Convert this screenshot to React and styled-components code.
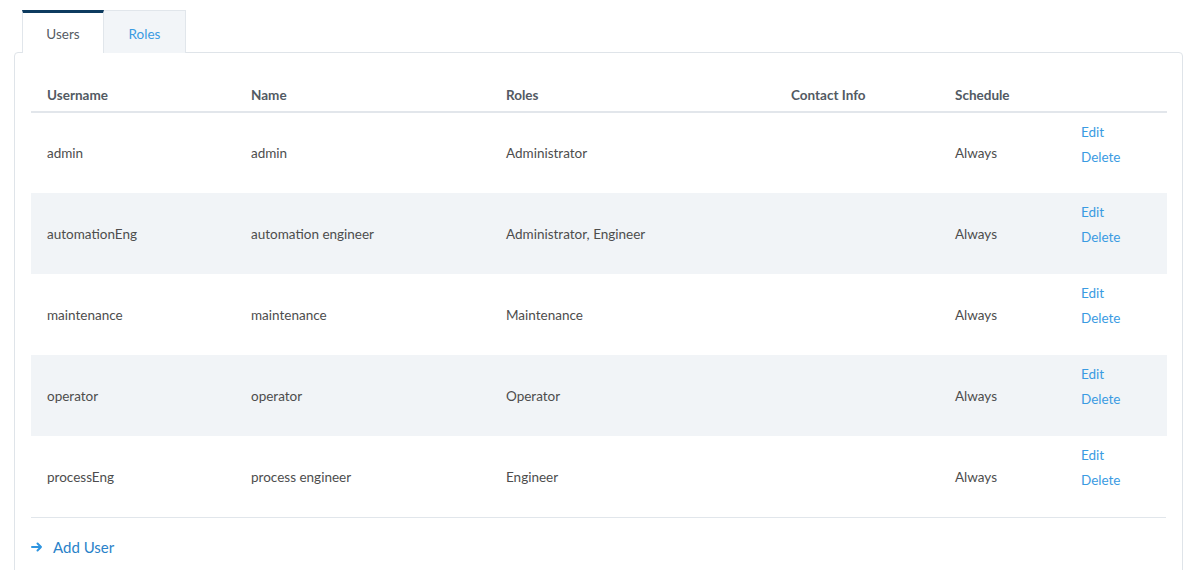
import React from 'react';
import styled, { createGlobalStyle } from 'styled-components';

const Global = createGlobalStyle`
  body {
    margin: 0;
    background: #ffffff;
    font-family: "Source Sans Pro", Lato, "Open Sans", sans-serif;
    color: #4a4a4a;
  }
`;

const Page = styled.div`
  padding: 10px 13px 0 14px;
  height: 570px;
  box-sizing: border-box;
  overflow: hidden;
`;

const Tabs = styled.div`
  display: flex;
  padding-left: 8px;
`;

const Tab = styled.div`
  width: 82px;
  height: 43px;
  box-sizing: border-box;
  display: flex;
  align-items: center;
  justify-content: center;
  font-size: 13.5px;
  border: 1px solid #e1e6eb;
  border-bottom: none;
  border-top: ${p => (p.active ? '3px solid #0d3b5f' : '1px solid #e1e6eb')};
  background: ${p => (p.active ? '#ffffff' : '#f2f5f8')};
  color: ${p => (p.active ? '#555b63' : '#3a9be2')};
  padding-top: ${p => (p.active ? '1px' : '3px')};
  margin-bottom: -1px;
  position: relative;
  z-index: 1;
  & + & {
    border-left: none;
  }
`;

const Panel = styled.div`
  border: 1px solid #dfe4e9;
  border-radius: 4px;
  padding: 26px 16px 0;
  min-height: 560px;
`;

const Table = styled.table`
  width: 100%;
  table-layout: fixed;
  border-collapse: collapse;
  font-size: 13.5px;
`;

const Th = styled.th`
  box-sizing: border-box;
  text-align: left;
  font-weight: 700;
  color: #525a63;
  padding: 0 16px;
  height: 33px;
  vertical-align: middle;
  border-bottom: 2px solid #e2e6eb;
  width: ${p => p.w}px;
`;

const Row = styled.tr`
  height: 81px;
  background: ${p => (p.striped ? '#f1f4f7' : '#ffffff')};
`;

const Td = styled.td`
  padding: 0 16px;
  height: 81px;
  box-sizing: border-box;
  vertical-align: middle;
  color: #4d4d4d;
`;

const Actions = styled.td`
  padding: 7px 16px 0;
  vertical-align: top;
`;

const Link = styled.a`
  display: block;
  color: #3a9be2;
  line-height: 25px;
  font-size: 13.5px;
  text-decoration: none;
  cursor: pointer;
`;

const Footer = styled.div`
  border-top: 1px solid #e1e6eb;
  padding: 18px 0;
`;

const AddUser = styled.a`
  display: inline-flex;
  align-items: center;
  gap: 10px;
  color: #2a82c9;
  font-size: 15px;
  line-height: 22px;
  text-decoration: none;
  cursor: pointer;
`;

const users = [
  ['admin', 'admin', 'Administrator'],
  ['automationEng', 'automation engineer', 'Administrator, Engineer'],
  ['maintenance', 'maintenance', 'Maintenance'],
  ['operator', 'operator', 'Operator'],
  ['processEng', 'process engineer', 'Engineer'],
];

const Arrow = () => (
  <svg width="12" height="12" viewBox="0 0 12 12" fill="none" stroke="#2f95e0" strokeWidth="2" strokeLinecap="round" strokeLinejoin="round">
    <path d="M1 6h9M6.5 2.5L10 6l-3.5 3.5" />
  </svg>
);

export default function App() {
  return (
    <Page>
      <Global />
      <Tabs>
        <Tab active>Users</Tab>
        <Tab>Roles</Tab>
      </Tabs>
      <Panel>
        <Table>
          <thead>
            <tr>
              <Th w={204}>Username</Th>
              <Th w={255}>Name</Th>
              <Th w={285}>Roles</Th>
              <Th w={164}>Contact Info</Th>
              <Th w={126}>Schedule</Th>
              <Th w={102} />
            </tr>
          </thead>
          <tbody>
            {users.map(([user, name, roles], i) => (
              <Row key={user} striped={i % 2 === 1}>
                <Td>{user}</Td>
                <Td>{name}</Td>
                <Td>{roles}</Td>
                <Td />
                <Td>Always</Td>
                <Actions>
                  <Link>Edit</Link>
                  <Link>Delete</Link>
                </Actions>
              </Row>
            ))}
          </tbody>
        </Table>
        <Footer>
          <AddUser>
            <Arrow />
            Add User
          </AddUser>
        </Footer>
      </Panel>
    </Page>
  );
}
